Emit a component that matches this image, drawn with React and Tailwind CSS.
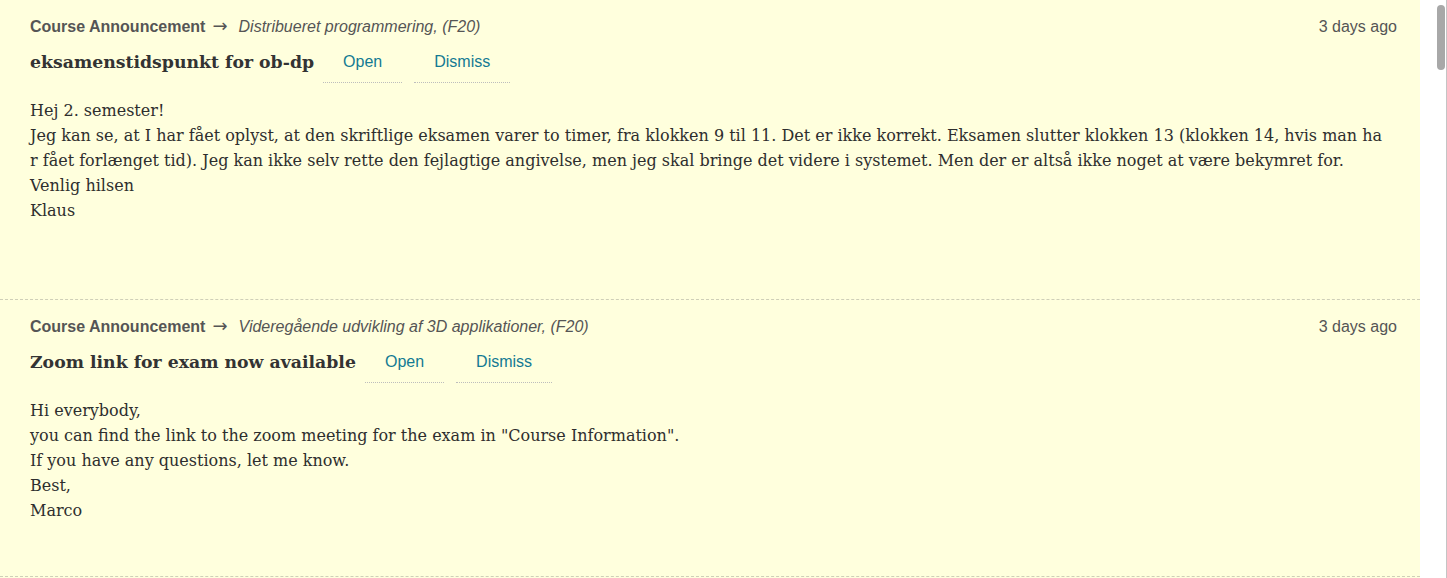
const items = [
  {
    course: 'Distribueret programmering, (F20)',
    title: 'eksamenstidspunkt for ob-dp',
    height: 'h-[300px]',
    lines: [
      'Hej 2. semester!',
      'Jeg kan se, at I har fået oplyst, at den skriftlige eksamen varer to timer, fra klokken 9 til 11. Det er ikke korrekt. Eksamen slutter klokken 13 (klokken 14, hvis man ha',
      'r fået forlænget tid). Jeg kan ikke selv rette den fejlagtige angivelse, men jeg skal bringe det videre i systemet. Men der er altså ikke noget at være bekymret for.',
      'Venlig hilsen',
      'Klaus',
    ],
  },
  {
    course: 'Videregående udvikling af 3D applikationer, (F20)',
    title: 'Zoom link for exam now available',
    height: 'h-[277px]',
    lines: [
      'Hi everybody,',
      'you can find the link to the zoom meeting for the exam in "Course Information".',
      'If you have any questions, let me know.',
      'Best,',
      'Marco',
    ],
  },
];

function Announcement({ item }) {
  return (
    <div className={`${item.height} border-b border-dashed border-[#cfcfb8] pl-[30px] pr-[23px] pt-[16px]`}>
      <div className="flex items-center justify-between font-['Liberation_Sans',Arial,sans-serif] text-[16px] leading-[20px] text-[#555]">
        <div>
          <span className="font-bold">Course Announcement</span>
          <span className="ml-[7px] mr-[6px] font-['DejaVu_Sans',sans-serif] text-[18px] leading-[20px]">→</span>
          <span className="ml-[5px] italic">{item.course}</span>
        </div>
        <div>3 days ago</div>
      </div>
      <div className="mt-[15px] flex items-start">
        <h3 className="font-['DejaVu_Serif',Georgia,serif] text-[17.3px] font-bold leading-[20px] text-[#333]">
          {item.title}
        </h3>
        <div className="ml-[9px] flex gap-[12px] font-['Liberation_Sans',Arial,sans-serif] text-[16px] leading-[20px] text-[#137a93]">
          <a href="#" className="border-b border-dotted border-[#bdbdbd] px-[20px] pb-[10px]">
            Open
          </a>
          <a href="#" className="border-b border-dotted border-[#bdbdbd] px-[20px] pb-[10px]">
            Dismiss
          </a>
        </div>
      </div>
      <div className="mt-[15px] font-['DejaVu_Serif',Georgia,serif] text-[16px] leading-[25px] text-[#2e2e2e]">
        {item.lines.map((l, i) => (
          <div key={i} className="whitespace-nowrap">
            {l}
          </div>
        ))}
      </div>
    </div>
  );
}

export default function App() {
  return (
    <div className="flex h-[578px] overflow-hidden bg-white">
      <div className="w-[1420px] bg-[#ffffdd]">
        {items.map((it, i) => (
          <Announcement key={i} item={it} />
        ))}
      </div>
      <div className="w-[15px]" />
      <div className="w-[12px] border-r border-[#c4c4c4] bg-white pt-[5px]">
        <div className="ml-[2px] h-[65px] w-[8px] rounded-full bg-[#a8a8a8]" />
      </div>
    </div>
  );
}
